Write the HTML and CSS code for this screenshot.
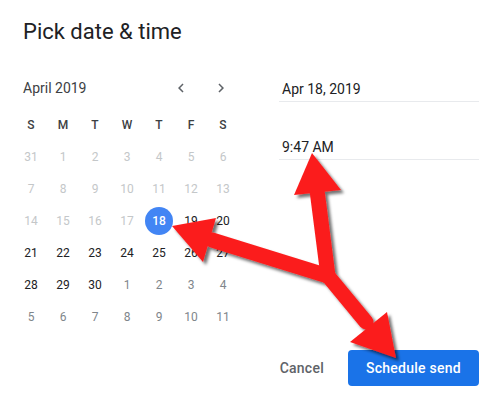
FILE: index.html
```html
<!DOCTYPE html>
<html lang="en">
<head>
  <meta charset="UTF-8">
  <title>Pick date &amp; time</title>
  <link rel="stylesheet" href="styles.css">
</head>
<body>

  <div class="dialog">
    <h1 class="title">Pick date &amp; time</h1>

    <div class="content">
      <!-- Calendar -->
      <div class="calendar">
        <div class="cal-head">
          <span class="month">April 2019</span>
          <div class="nav">
            <button class="nav-btn" title="Previous month">
              <svg width="18" height="18" viewBox="0 0 24 24"><path d="M15.41 7.41L14 6l-6 6 6 6 1.41-1.41L10.83 12z"/></svg>
            </button>
            <button class="nav-btn" title="Next month">
              <svg width="18" height="18" viewBox="0 0 24 24"><path d="M8.59 16.59L10 18l6-6-6-6-1.41 1.41L13.17 12z"/></svg>
            </button>
          </div>
        </div>

        <div class="grid">
          <span class="wd">S</span><span class="wd">M</span><span class="wd">T</span><span class="wd">W</span><span class="wd">T</span><span class="wd">F</span><span class="wd">S</span>

          <span class="day past">31</span><span class="day past">1</span><span class="day past">2</span><span class="day past">3</span><span class="day past">4</span><span class="day past">5</span><span class="day past">6</span>
          <span class="day past">7</span><span class="day past">8</span><span class="day past">9</span><span class="day past">10</span><span class="day past">11</span><span class="day past">12</span><span class="day past">13</span>
          <span class="day past">14</span><span class="day past">15</span><span class="day past">16</span><span class="day past">17</span><span class="day selected"><b>18</b></span><span class="day">19</span><span class="day">20</span>
          <span class="day">21</span><span class="day">22</span><span class="day">23</span><span class="day">24</span><span class="day">25</span><span class="day">26</span><span class="day">27</span>
          <span class="day">28</span><span class="day">29</span><span class="day">30</span><span class="day next">1</span><span class="day next">2</span><span class="day next">3</span><span class="day next">4</span>
          <span class="day next">5</span><span class="day next">6</span><span class="day next">7</span><span class="day next">8</span><span class="day next">9</span><span class="day next">10</span><span class="day next">11</span>
        </div>
      </div>

      <!-- Date / time fields -->
      <div class="fields">
        <div class="field">Apr 18, 2019</div>
        <div class="field">9:47 AM</div>
      </div>
    </div>

    <div class="actions">
      <button class="btn-text">Cancel</button>
      <button class="btn-primary">Schedule send</button>
    </div>

    <!-- annotation arrows drawn over the dialog -->
    <svg class="arrows" width="501" height="408" viewBox="0 0 501 408">
      <defs>
        <filter id="shadow" x="-20%" y="-20%" width="140%" height="140%">
          <feDropShadow dx="3" dy="3" stdDeviation="1.6" flood-color="#000" flood-opacity="0.55"/>
        </filter>
      </defs>
      <g filter="url(#shadow)" fill="#fb1f1f" stroke="#fb1f1f">
        <line x1="328" y1="276" x2="317" y2="190" stroke-width="15" stroke-linecap="round"/>
        <line x1="328" y1="276" x2="212" y2="240" stroke-width="15" stroke-linecap="round"/>
        <line x1="328" y1="276" x2="366" y2="322" stroke-width="15" stroke-linecap="round"/>
        <polygon points="312,153 341,190 294,195" stroke="none"/>
        <polygon points="172,226 216,218 203,262" stroke="none"/>
        <polygon points="396,358 350,342 387,312" stroke="none"/>
      </g>
    </svg>
  </div>

</body>
</html>
```

FILE: styles.css
```css
body {
  margin: 0;
  padding: 0;
  background: #ffffff;
  font-family: Roboto, "Liberation Sans", Arial, sans-serif;
  color: #202124;
}

.dialog {
  position: relative;
  width: 501px;
  height: 408px;
  box-sizing: border-box;
  padding: 0 22px 0 15px;
  overflow: hidden;
}

.title {
  margin: 18px 0 0 8px;
  font-size: 22px;
  line-height: 28px;
  font-weight: 400;
  color: #202124;
}

.content {
  display: flex;
  gap: 40px;
  margin-top: 30px;
}

/* calendar */
.calendar {
  width: 224px;
}

.cal-head {
  display: flex;
  align-items: center;
  justify-content: space-between;
  height: 24px;
  padding-left: 8px;
  margin-bottom: 9px;
}

.month {
  font-size: 14px;
  line-height: 20px;
  color: #3c4043;
}

.nav {
  display: flex;
  gap: 16px;
  margin-right: 6px;
}

.nav-btn {
  width: 24px;
  height: 24px;
  padding: 0;
  border: none;
  background: none;
  display: flex;
  align-items: center;
  justify-content: center;
  cursor: pointer;
}

.nav-btn svg {
  fill: #5f6368;
}

.grid {
  display: grid;
  grid-template-columns: repeat(7, 32px);
  grid-auto-rows: 32px;
}

.wd,
.day {
  display: flex;
  align-items: center;
  justify-content: center;
  font-size: 12px;
}

.wd {
  font-weight: 500;
  color: #3c4043;
}

.day {
  color: #202124;
}

.day.past {
  color: #c4c7c9;
}

.day.next {
  color: #80868b;
}

.day.selected b {
  width: 28px;
  height: 28px;
  border-radius: 50%;
  background: #4285f4;
  color: #ffffff;
  font-weight: 500;
  display: flex;
  align-items: center;
  justify-content: center;
}

/* fields */
.fields {
  width: 200px;
}

.field {
  padding: 3px 3px 2px;
  font-size: 14px;
  line-height: 20px;
  color: #202124;
  border-bottom: 1px solid #e8eaed;
}

.field + .field {
  margin-top: 32px;
}

/* actions */
.actions {
  display: flex;
  justify-content: flex-end;
  align-items: center;
  gap: 16px;
  margin-top: 17px;
}

.btn-text,
.btn-primary {
  height: 36px;
  border: none;
  border-radius: 4px;
  font-family: inherit;
  font-size: 14px;
  font-weight: 500;
  letter-spacing: 0.25px;
  cursor: pointer;
}

.btn-text {
  padding: 0 8px;
  background: none;
  color: #5f6368;
}

.btn-primary {
  padding: 0 16px;
  width: 131px;
  background: #1a73e8;
  color: #ffffff;
}

.arrows {
  position: absolute;
  top: 0;
  left: 0;
  pointer-events: none;
}
```
